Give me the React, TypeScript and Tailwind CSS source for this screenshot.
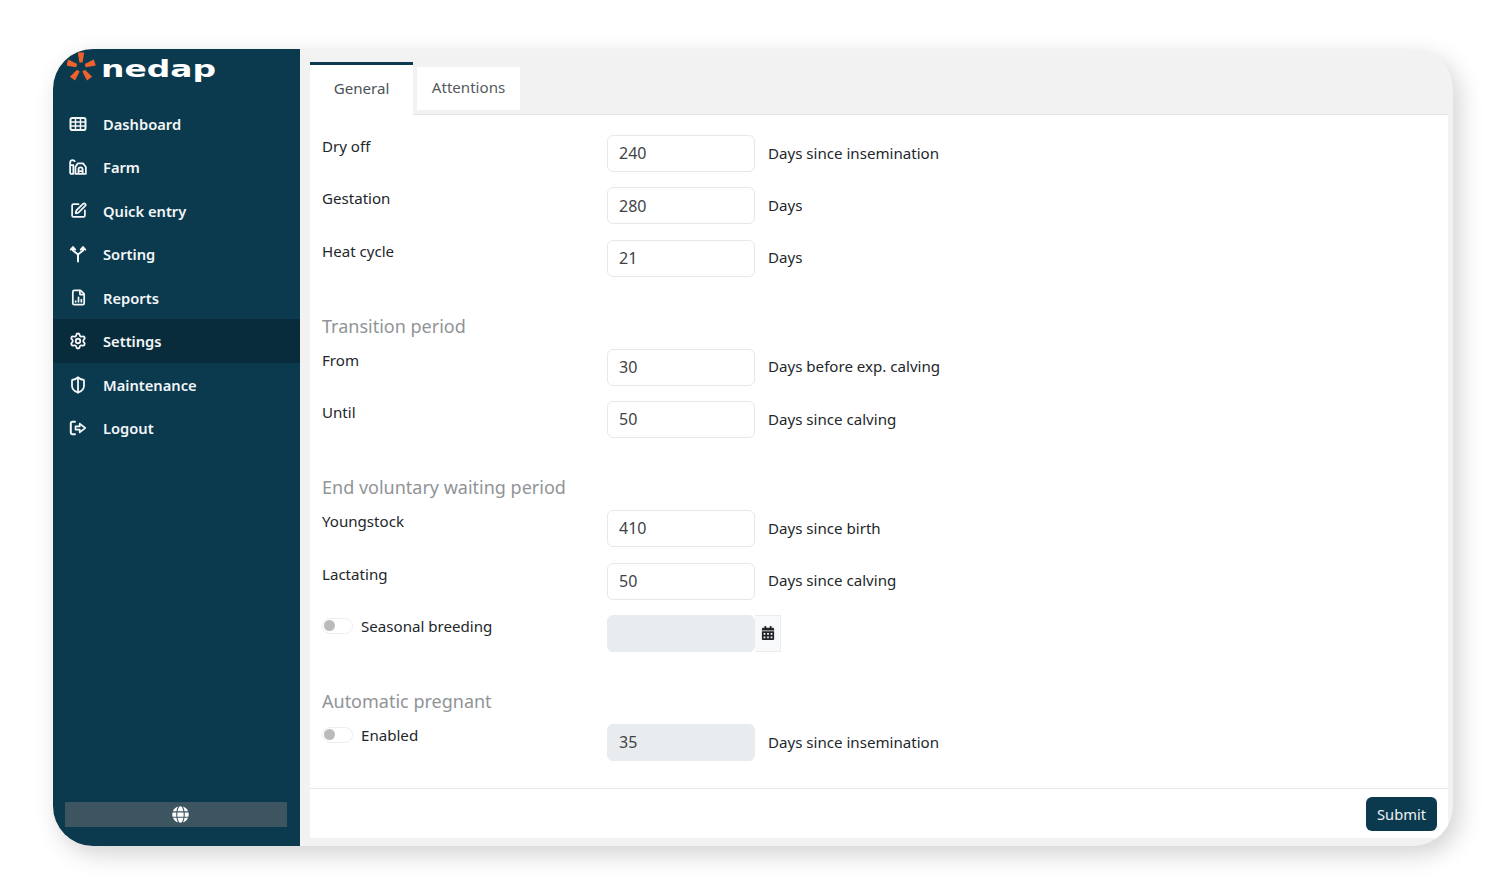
import { FaCalendarAlt, FaGlobe } from "react-icons/fa";
import { FileChartColumn, Settings, ShieldHalf, SquarePen } from "lucide-react";
import type { ReactNode } from "react";

const TableIcon = () => (
  <svg width="18" height="18" viewBox="0 0 18 18" fill="none" stroke="currentColor" strokeWidth="2">
    <rect x="1.5" y="3" width="15" height="12" rx="1.8" />
    <path d="M1.5 7h15M1.5 11h15M6.5 3v12M11.5 3v12" strokeWidth="1.5" />
  </svg>
);

const FarmIcon = () => (
  <svg width="19" height="18" viewBox="0 0 19 18" fill="none" stroke="currentColor" strokeWidth="1.9" strokeLinejoin="round">
    <path d="M1.2 16.2V4.5C1.2 3 2.2 1.8 3.6 1.8S6 2.8 6 3.8M1.2 7h3.4v9.2H1.2" />
    <path d="M6.8 16.2V9l2.4-3.8h5.6L17.8 9v7.2z" />
    <path d="M10 16v-4.2C10 10.4 11 9.4 12.2 9.4s2.2 1 2.2 2.4V16M10 13.3h4.4" />
  </svg>
);

const SortIcon = () => (
  <svg width="18" height="18" viewBox="0 0 18 18" fill="none" stroke="currentColor" strokeWidth="2" strokeLinecap="round" strokeLinejoin="round">
    <path d="M9 16.5V9.5L4 5.5V2.5M9 9.5l5-4V2.5" />
    <path d="M1.8 4.6 4 2.2l2.2 2.4M11.8 4.6 14 2.2l2.2 2.4" />
  </svg>
);

const LogoutIcon = () => (
  <svg width="18" height="18" viewBox="0 0 18 18" fill="none" stroke="currentColor" strokeWidth="2" strokeLinecap="round" strokeLinejoin="round">
    <path d="M6 2.8H3.2c-.8 0-1.4.6-1.4 1.4v9.6c0 .8.6 1.4 1.4 1.4H6" />
    <path d="M6.5 7.4h4.2V4.6L16.2 9l-5.5 4.4v-2.8H6.5z" strokeWidth="1.7" />
  </svg>
);

const STAR_ARMS = [0, 72, 144, 216, 288];

const NedapLogo = () => (
  <svg width="152" height="36" viewBox="0 0 152 36" className="block">
    <g fill="#f0622d">
      {STAR_ARMS.map((angle) => (
        <path key={angle} d="M10.8 2.5h6.4L15.6 12.5h-3.2z" transform={`rotate(${angle} 14 17)`} />
      ))}
    </g>
    <text
      x="34"
      y="26.5"
      fill="#ffffff"
      fontFamily="'DejaVu Sans', sans-serif"
      fontSize="23"
      fontWeight="700"
      textLength="115"
      lengthAdjust="spacingAndGlyphs"
    >
      nedap
    </text>
  </svg>
);

const NAV_ITEMS: { label: string; icon: ReactNode; active?: boolean }[] = [
  { label: "Dashboard", icon: <TableIcon /> },
  { label: "Farm", icon: <FarmIcon /> },
  { label: "Quick entry", icon: <SquarePen size={17} strokeWidth={2.5} /> },
  { label: "Sorting", icon: <SortIcon /> },
  { label: "Reports", icon: <FileChartColumn size={17} strokeWidth={2.5} /> },
  { label: "Settings", icon: <Settings size={18} strokeWidth={2.4} />, active: true },
  { label: "Maintenance", icon: <ShieldHalf size={18} strokeWidth={2.4} /> },
  { label: "Logout", icon: <LogoutIcon /> },
];

const Sidebar = () => (
  <aside className="flex w-[247px] shrink-0 flex-col bg-[#0b3a4f] text-[#f4f6f7]">
    <div className="h-[52.75px] pl-[14px] pt-[1px]">
      <NedapLogo />
    </div>
    <nav className="flex flex-col">
      {NAV_ITEMS.map((item) => (
        <div
          key={item.label}
          className={`flex h-[43.5px] items-center pl-[16px] text-[14.7px] font-semibold ${item.active ? "bg-[#092c3d]" : ""}`}
        >
          <span className="flex w-[18px] justify-center">{item.icon}</span>
          <span className="ml-[16px] pt-[0.5px]">{item.label}</span>
        </div>
      ))}
    </nav>
    <div className="mb-[19px] ml-[12px] mt-auto flex h-[25px] w-[222px] items-center justify-center bg-[#3d5560] pl-[8px] text-white">
      <FaGlobe size={17} />
    </div>
  </aside>
);

const Field = ({ value, disabled }: { value: string; disabled?: boolean }) => (
  <div
    className={`flex h-[37px] w-[148px] items-center rounded-[6px] border pb-[0.5px] pl-[11px] text-[16px] text-[#3f4347] ${
      disabled ? "border-[#e9ecef] bg-[#e9ecef]" : "border-[#e6e8eb] bg-white"
    }`}
  >
    {value}
  </div>
);

const Row = ({ label, value, unit }: { label: string; value: string; unit: string }) => (
  <div className="mb-[15.4px] flex h-[37px]">
    <div className="w-[285px] pt-[1px] leading-[20px]">{label}</div>
    <Field value={value} />
    <div className="ml-[13px] flex items-center pb-[1.2px]">{unit}</div>
  </div>
);

const Toggle = ({ label }: { label: string }) => (
  <div className="flex h-[19px] w-[285px] items-center pt-[3px]">
    <span className="flex h-[16px] w-[31px] items-center rounded-full border border-[#eeeeee] bg-white pl-[1px]">
      <span className="h-[11px] w-[11px] rounded-full bg-[#bbbbbb]" />
    </span>
    <span className="ml-[8px]">{label}</span>
  </div>
);

const SectionTitle = ({ children }: { children: ReactNode }) => (
  <h2 className="mb-[9px] mt-[37px] h-[26px] text-[18px] leading-[24px] text-[#8f9497]">{children}</h2>
);

export default function App() {
  return (
    <div className="h-[895px] bg-white pl-[53px] pt-[49px] font-['Noto_Sans',sans-serif] text-[15.1px] text-[#23272b]">
      <div className="flex h-[797px] w-[1400px] overflow-hidden rounded-[40px] bg-[#f2f2f2] shadow-[6px_8px_24px_rgba(0,0,0,0.18)]">
        <Sidebar />
        <main className="flex flex-1 flex-col pb-[8px] pl-[10px] pr-[5px]">
          <div className="flex h-[66px] items-start border-b border-[#e4e4e4] pt-[13px]">
            <div className="flex h-[53px] w-[103px] items-center justify-center border-t-[3px] border-[#0b3a4f] bg-white pb-[3px] text-[#4a5258]">
              General
            </div>
            <div className="ml-[4px] mt-[5px] flex h-[43px] w-[103px] items-center justify-center bg-white pb-[2px] text-[#55595d]">
              Attentions
            </div>
          </div>
          <div className="flex flex-1 flex-col bg-white">
            <div className="flex-1 px-[12px] pt-[20px]">
              <Row label="Dry off" value="240" unit="Days since insemination" />
              <Row label="Gestation" value="280" unit="Days" />
              <Row label="Heat cycle" value="21" unit="Days" />
              <SectionTitle>Transition period</SectionTitle>
              <Row label="From" value="30" unit="Days before exp. calving" />
              <Row label="Until" value="50" unit="Days since calving" />
              <SectionTitle>End voluntary waiting period</SectionTitle>
              <Row label="Youngstock" value="410" unit="Days since birth" />
              <Row label="Lactating" value="50" unit="Days since calving" />
              <div className="flex h-[37px]">
                <Toggle label="Seasonal breeding" />
                <Field value="" disabled />
                <div className="flex w-[26px] items-center justify-center border border-l-0 border-[#e9ecef] bg-[#f8f9fa] text-[#212529]">
                  <FaCalendarAlt size={14} />
                </div>
              </div>
              <SectionTitle>Automatic pregnant</SectionTitle>
              <div className="flex h-[37px]">
                <Toggle label="Enabled" />
                <Field value="35" disabled />
                <div className="ml-[13px] flex items-center pb-[1.2px]">Days since insemination</div>
              </div>
            </div>
            <div className="flex h-[50px] items-start justify-end border-t border-[#e8e8e8] pr-[11px] pt-[8px]">
              <button className="h-[34px] w-[71px] rounded-[6px] bg-[#0b3a4f] text-[14.7px] text-[#eef1f2]">Submit</button>
            </div>
          </div>
        </main>
      </div>
    </div>
  );
}
